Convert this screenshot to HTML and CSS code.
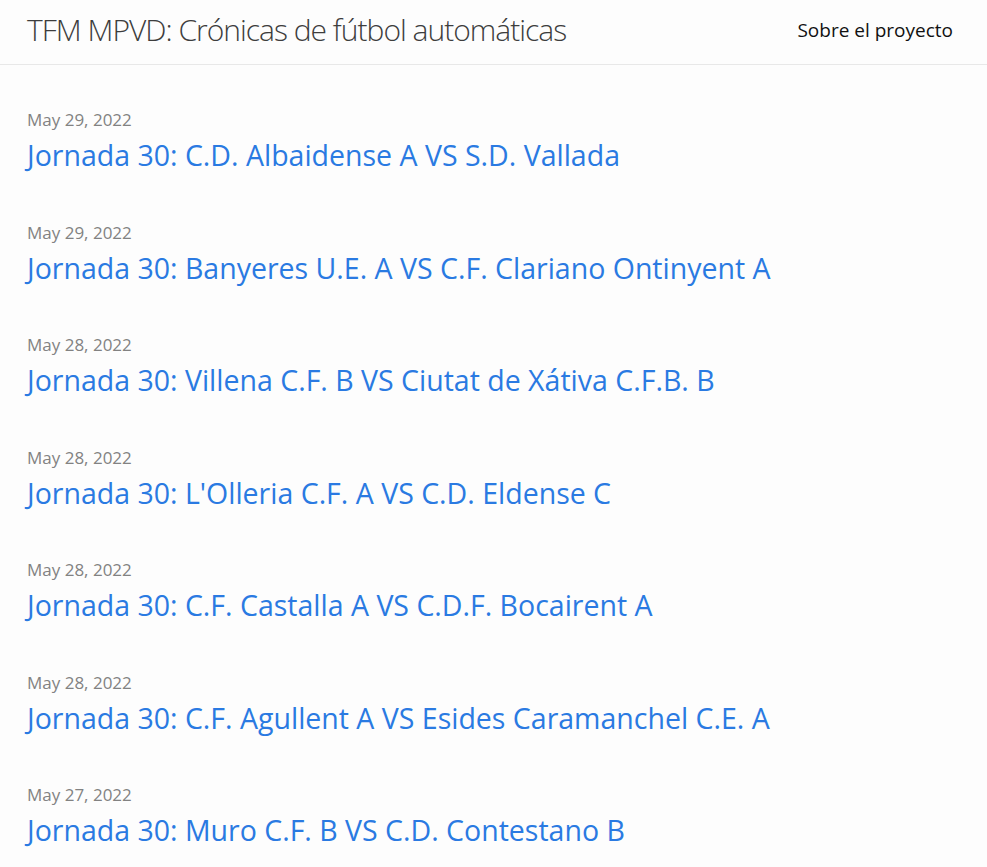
FILE: index.html
```html
<!DOCTYPE html>
<html lang="es">
<head>
<meta charset="utf-8">
<title>TFM MPVD: Crónicas de fútbol automáticas</title>
<link rel="stylesheet" href="styles.css">
</head>
<body>
<header class="site-header">
  <div class="wrapper header-inner">
    <a class="site-title" href="#">TFM MPVD: Crónicas de fútbol automáticas</a>
    <nav class="site-nav"><a class="page-link" href="#">Sobre el proyecto</a></nav>
  </div>
</header>
<main class="page-content">
  <div class="wrapper">
    <ul class="post-list">
      <li><span class="post-meta">May 29, 2022</span><h3><a class="post-link" href="#">Jornada 30: C.D. Albaidense A VS S.D. Vallada</a></h3></li>
      <li><span class="post-meta">May 29, 2022</span><h3><a class="post-link" href="#">Jornada 30: Banyeres U.E. A VS C.F. Clariano Ontinyent A</a></h3></li>
      <li><span class="post-meta">May 28, 2022</span><h3><a class="post-link" href="#">Jornada 30: Villena C.F. B VS Ciutat de Xátiva C.F.B. B</a></h3></li>
      <li><span class="post-meta">May 28, 2022</span><h3><a class="post-link" href="#">Jornada 30: L'Olleria C.F. A VS C.D. Eldense C</a></h3></li>
      <li><span class="post-meta">May 28, 2022</span><h3><a class="post-link" href="#">Jornada 30: C.F. Castalla A VS C.D.F. Bocairent A</a></h3></li>
      <li><span class="post-meta">May 28, 2022</span><h3><a class="post-link" href="#">Jornada 30: C.F. Agullent A VS Esides Caramanchel C.E. A</a></h3></li>
      <li><span class="post-meta">May 27, 2022</span><h3><a class="post-link" href="#">Jornada 30: Muro C.F. B VS C.D. Contestano B</a></h3></li>
    </ul>
  </div>
</main>
</body>
</html>
```

FILE: styles.css
```css
html, body {
  margin: 0;
  padding: 0;
  background: #fdfdfd;
  color: #111111;
  font-family: "Open Sans", "Noto Sans", sans-serif;
}

a { text-decoration: none; }

.wrapper {
  padding: 0 34px 0 27px;
}

.site-header {
  border-bottom: 1px solid #e8e8e8;
  height: 65px;
  box-sizing: border-box;
}

.header-inner {
  display: flex;
  justify-content: space-between;
  align-items: center;
  height: 100%;
  box-sizing: border-box;
  padding-bottom: 5px;
}

.site-title {
  font-size: 30px;
  font-weight: 300;
  letter-spacing: -1px;
  color: #3d3d3d;
}

.page-link {
  font-size: 19px;
  color: #111111;
}

.page-content {
  padding-top: 41px;
}

.post-list {
  list-style: none;
  margin: 0;
  padding: 0;
}

.post-list li {
  height: 112.5px;
}

.post-meta {
  display: block;
  font-size: 17px;
  line-height: 27px;
  color: #828282;
}

.post-list h3 {
  margin: 0;
  font-weight: 400;
  line-height: 45px;
}

.post-link {
  font-size: 28.5px;
  color: #2a7ae2;
}
```
